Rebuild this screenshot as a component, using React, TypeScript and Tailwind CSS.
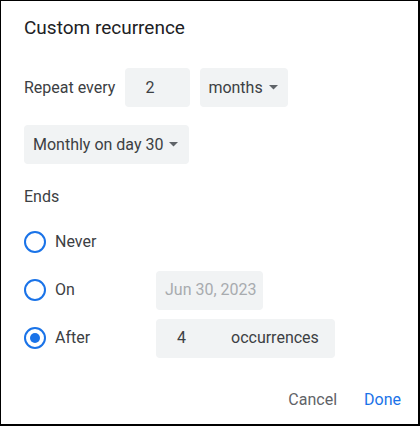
import React from "react"

function Caret() {
    return (
        <svg width="9" height="5" viewBox="0 0 9 5" className="shrink-0">
            <path d="M0 0 L9 0 L4.5 4.5 Z" fill="#5f6368" />
        </svg>
    )
}

function Radio({ checked }: { checked?: boolean }) {
    return (
        <span className="flex items-center justify-center w-[22px] h-[22px] rounded-full border-2 border-[#1a73e8] shrink-0">
            {checked && <span className="w-[10px] h-[10px] rounded-full bg-[#1a73e8]" />}
        </span>
    )
}

function EndOption({ label, checked, children }: { label: string; checked?: boolean; children?: React.ReactNode }) {
    return (
        <div className="flex items-center h-[40px]">
            <Radio checked={checked} />
            <span className="ml-[9px] w-[101px] text-[16px] text-[#3c4043]">{label}</span>
            {children}
        </div>
    )
}

export default function App() {
    return (
        <div
            className="w-[420px] h-[426px] bg-white border-t border-l border-r-2 border-b-2 border-black flex flex-col pl-[23px] pr-4"
            style={{ fontFamily: "Roboto, 'Liberation Sans', sans-serif" }}
        >
            <h1 className="pt-[15px] text-[19px] leading-[24px] text-[#202124]">Custom recurrence</h1>

            <div className="mt-[28px] flex items-center gap-[10px] text-[16px] text-[#3c4043]">
                <span>Repeat every</span>
                <div className="h-[39px] w-[65px] rounded bg-[#f1f3f4] flex items-center pl-[20px]">2</div>
                <div className="h-[39px] w-[88px] rounded bg-[#f1f3f4] flex items-center justify-between pl-[8px] pr-[10px]">
                    <span>months</span>
                    <Caret />
                </div>
            </div>

            <div className="mt-[18px] h-[39px] w-[165px] rounded bg-[#f1f3f4] flex items-center justify-between pl-[9px] pr-[11px] text-[16px] text-[#3c4043]">
                <span>Monthly on day 30</span>
                <Caret />
            </div>

            <div className="mt-[21px] text-[16px] leading-[24px] text-[#3c4043]">Ends</div>

            <div className="mt-[13px] flex flex-col gap-[8px]">
                <EndOption label="Never" />
                <EndOption label="On">
                    <div className="h-[39px] w-[107px] rounded bg-[#f1f3f4] flex items-center pl-[9px] text-[16px] text-[#a8abaf]">
                        Jun 30, 2023
                    </div>
                </EndOption>
                <EndOption label="After" checked>
                    <div className="h-[39px] w-[179px] rounded bg-[#f1f3f4] flex items-center text-[16px] text-[#3c4043]">
                        <span className="pl-[21px] w-[75px]">4</span>
                        <span>occurrences</span>
                    </div>
                </EndOption>
            </div>

            <div className="mt-auto mb-[12px] flex justify-end items-center gap-[27px] pr-[1px] text-[16px]">
                <span className="text-[#5f6368]">Cancel</span>
                <span className="text-[#1a73e8]">Done</span>
            </div>
        </div>
    )
}
